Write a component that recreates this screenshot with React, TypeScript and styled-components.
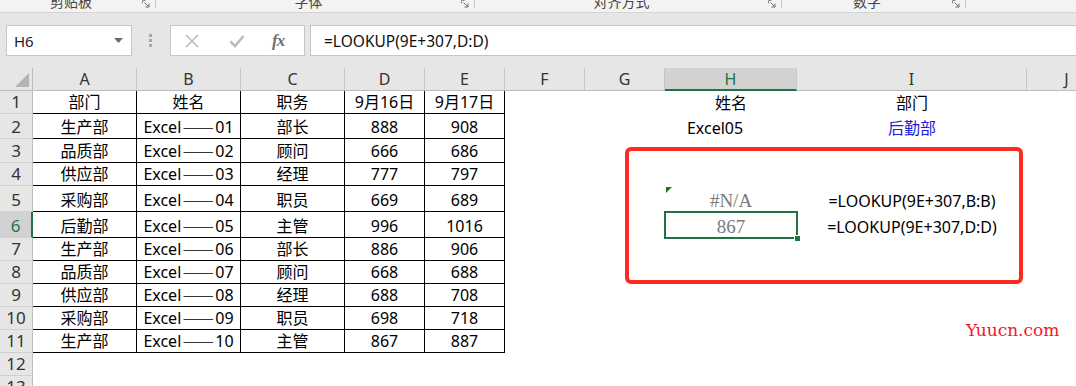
import React from "react";
import styled, { createGlobalStyle, css } from "styled-components";

const GREEN = "#217346";

const GlobalStyle = createGlobalStyle`
  html, body {
    margin: 0;
    padding: 0;
    background: #fff;
    overflow: hidden;
  }
  body {
    font-family: "Noto Sans", "Noto Sans CJK SC", sans-serif;
  }
`;

const Page = styled.div`
  width: 1076px;
  height: 386px;
  overflow: hidden;
  display: flex;
  flex-direction: column;
`;

/* ---------- ribbon (only its bottom edge is visible) ---------- */

const Ribbon = styled.div`
  display: flex;
  height: 12px;
  flex-shrink: 0;
  background: #f3f3f3;
  border-bottom: 1px solid #d5d5d5;
  overflow: hidden;
`;

const RibbonGroup = styled.div<{ $w: number }>`
  display: flex;
  align-items: flex-start;
  width: ${({ $w }) => $w}px;
  flex-shrink: 0;
`;

const GroupLabel = styled.div`
  flex: 1;
  margin-top: -6px;
  text-align: center;
  font-family: "Noto Sans CJK SC", sans-serif;
  font-size: 14px;
  line-height: 14px;
  color: #444;
`;

const Launcher = styled.svg`
  width: 8px;
  height: 8px;
  margin-right: 5px;
  flex-shrink: 0;
`;

const Divider = styled.div`
  width: 1px;
  height: 8px;
  background: #c6c6c6;
  flex-shrink: 0;
`;

/* ---------- formula bar ---------- */

const FormulaBand = styled.div`
  height: 55px;
  flex-shrink: 0;
  box-sizing: border-box;
  padding-top: 12px;
  background: #e6e6e6;
  display: flex;
  align-items: flex-start;
`;

const NameBox = styled.div`
  margin-left: 6px;
  width: 126px;
  height: 31px;
  box-sizing: border-box;
  background: #fff;
  border: 1px solid #c6c6c6;
  display: flex;
  align-items: center;
  justify-content: space-between;
  padding: 0 8px 0 7px;
  font-size: 15px;
  color: #222;
`;

const DropArrow = styled.svg`
  width: 9px;
  height: 5px;
`;

const Grip = styled.div`
  margin: 9px 0 0 17px;
  width: 3px;
  display: flex;
  flex-direction: column;
  gap: 2px;
  span {
    display: block;
    width: 3px;
    height: 3px;
    background: #a6a6a6;
  }
`;

const FxBox = styled.div`
  margin-left: 18px;
  width: 135px;
  height: 31px;
  box-sizing: border-box;
  background: #fff;
  border: 1px solid #c6c6c6;
  display: flex;
  align-items: center;
  padding-left: 13px;
`;

const BarIcon = styled.svg<{ $gap: number }>`
  width: 16px;
  height: 16px;
  margin-right: ${({ $gap }) => $gap}px;
`;

const FxLabel = styled.span`
  font-family: "Liberation Serif", serif;
  font-style: italic;
  font-weight: bold;
  font-size: 17px;
  color: #6f6f6f;
  letter-spacing: -1px;
`;

const FormulaInput = styled.div`
  margin-left: 5px;
  flex: 1;
  height: 31px;
  box-sizing: border-box;
  background: #fff;
  border: 1px solid #c6c6c6;
  border-right: none;
  display: flex;
  align-items: center;
  padding-left: 13px;
  font-size: 15.5px;
  color: #111;
`;

/* ---------- sheet ---------- */

const ROW_HEIGHTS = [23, 23, 25, 24, 23, 26, 26, 23, 23, 23, 23, 23, 23, 23];

const Sheet = styled.div`
  position: relative;
  flex: 1;
  overflow: hidden;
  display: grid;
  grid-template-columns: 33px 104px 104px 104px 80px 80px 80px 80px 132px 230px 80px;
  grid-template-rows: ${ROW_HEIGHTS.map((h) => `${h}px`).join(" ")};
`;

const Corner = styled.div`
  position: relative;
  background: #e6e6e6;
  border-right: 1px solid #bdbdbd;
  border-bottom: 1px solid #bdbdbd;
  svg {
    position: absolute;
    left: 0;
    top: 0;
  }
`;

const ColHead = styled.div<{ $active?: boolean }>`
  display: flex;
  align-items: center;
  justify-content: center;
  box-sizing: border-box;
  font-size: 16px;
  background: ${({ $active }) => ($active ? "#d2d2d2" : "#e6e6e6")};
  color: ${({ $active }) => ($active ? GREEN : "#333")};
  border-right: 1px solid #c6c6c6;
  border-bottom: ${({ $active }) => ($active ? `2px solid ${GREEN}` : "1px solid #bdbdbd")};
`;

const RowHead = styled.div<{ $active?: boolean }>`
  display: flex;
  align-items: flex-end;
  justify-content: center;
  box-sizing: border-box;
  padding-bottom: 1px;
  font-size: 17px;
  line-height: 21px;
  background: ${({ $active }) => ($active ? "#d2d2d2" : "#e6e6e6")};
  color: ${({ $active }) => ($active ? GREEN : "#333")};
  border-bottom: 1px solid #d0d0d0;
  border-right: ${({ $active }) => ($active ? `2px solid ${GREEN}` : "1px solid #bdbdbd")};
`;

const Cell = styled.div<{ $boxed?: boolean; $shift?: number }>`
  position: relative;
  display: flex;
  align-items: flex-end;
  justify-content: center;
  box-sizing: border-box;
  padding-bottom: 1px;
  padding-right: ${({ $shift }) => $shift ?? 0}px;
  font-size: 16px;
  line-height: 20px;
  color: #000;
  white-space: nowrap;
  ${({ $boxed }) =>
    $boxed &&
    css`
      border-right: 1px solid #000;
      border-bottom: 1px solid #000;
    `}
`;

const ErrorCell = styled(Cell)`
  &::before {
    content: "";
    position: absolute;
    left: 1px;
    top: 1px;
    border-top: 6px solid #1d7a1d;
    border-right: 6px solid transparent;
  }
`;

const SelectedCell = styled(Cell)`
  &::after {
    content: "";
    position: absolute;
    inset: -1px;
    border: 2px solid ${GREEN};
  }
  &::before {
    content: "";
    position: absolute;
    right: -4px;
    bottom: -4px;
    width: 5px;
    height: 5px;
    background: ${GREEN};
    border: 1px solid #fff;
    z-index: 1;
  }
`;

const Value = styled.span<{ $serif?: boolean; $color?: string }>`
  color: ${({ $color }) => $color ?? "inherit"};
  ${({ $serif }) =>
    $serif &&
    css`
      font-family: "Liberation Serif", serif;
      font-size: 19px;
    `}
`;

// full-width dashes, joined into one line as in the CJK font
const Dash = styled.span`
  font-family: "Noto Sans CJK SC", sans-serif;
  font-feature-settings: "fwid" 1;
  margin: 0 1px;
`;

const RedFrame = styled.div`
  position: absolute;
  left: 625px;
  top: 79px;
  width: 398px;
  height: 137px;
  box-sizing: border-box;
  border: 4px solid #ff2a1f;
  border-radius: 6px;
  pointer-events: none;
`;

const Watermark = styled.div`
  position: absolute;
  left: 966px;
  top: 253px;
  font-family: "DejaVu Serif", serif;
  font-size: 17px;
  line-height: 19px;
  color: #f0182a;
`;

/* ---------- data ---------- */

const COLS = ["A", "B", "C", "D", "E", "F", "G", "H", "I", "J"];

const TABLE = [
  ["部门", "姓名", "职务", "9月16日", "9月17日"],
  ["生产部", "Excel——01", "部长", "888", "908"],
  ["品质部", "Excel——02", "顾问", "666", "686"],
  ["供应部", "Excel——03", "经理", "777", "797"],
  ["采购部", "Excel——04", "职员", "669", "689"],
  ["后勤部", "Excel——05", "主管", "996", "1016"],
  ["生产部", "Excel——06", "部长", "886", "906"],
  ["品质部", "Excel——07", "顾问", "668", "688"],
  ["供应部", "Excel——08", "经理", "688", "708"],
  ["采购部", "Excel——09", "职员", "698", "718"],
  ["生产部", "Excel——10", "主管", "867", "887"],
];

const RIBBON = [
  { label: "剪贴板", w: 156 },
  { label: "字体", w: 319 },
  { label: "对齐方式", w: 307 },
  { label: "数字", w: 184 },
];

const LauncherIcon = () => (
  <Launcher viewBox="0 0 8 8">
    <path d="M0.5 0.5h3M0.5 0.5v3" stroke="#8a8a8a" strokeWidth="1" fill="none" />
    <path d="M2.5 2.5l4 4M7 3.5V7H3.5" stroke="#6a6a6a" strokeWidth="1" fill="none" />
  </Launcher>
);

const renderText = (text: string) => {
  if (!text.includes("——")) return text;
  const [head, tail] = text.split("——");
  return (
    <>
      {head}
      <Dash>——</Dash>
      {tail}
    </>
  );
};

const renderExtra = (row: number, col: string) => {
  const key = `${row}-${col}`;
  if (row === 1 && col === "H") return <Cell key={key}>姓名</Cell>;
  if (row === 1 && col === "I") return <Cell key={key}>部门</Cell>;
  if (row === 2 && col === "H")
    return (
      <Cell key={key} $shift={32}>
        Excel05
      </Cell>
    );
  if (row === 2 && col === "I")
    return (
      <Cell key={key}>
        <Value $color="#1a1ad6">后勤部</Value>
      </Cell>
    );
  if (row === 5 && col === "H")
    return (
      <ErrorCell key={key}>
        <Value $serif $color="#7b7b7b">
          #N/A
        </Value>
      </ErrorCell>
    );
  if (row === 5 && col === "I") return <Cell key={key}>=LOOKUP(9E+307,B:B)</Cell>;
  if (row === 6 && col === "H")
    return (
      <SelectedCell key={key}>
        <Value $serif $color="#7b7b7b">
          867
        </Value>
      </SelectedCell>
    );
  if (row === 6 && col === "I") return <Cell key={key}>=LOOKUP(9E+307,D:D)</Cell>;
  return <Cell key={key} />;
};

export default function App() {
  const rowCount = ROW_HEIGHTS.length - 1;

  return (
    <Page>
      <GlobalStyle />
      <Ribbon>
        {RIBBON.map((g) => (
          <RibbonGroup key={g.label} $w={g.w}>
            <GroupLabel>{g.label}</GroupLabel>
            <LauncherIcon />
            <Divider />
          </RibbonGroup>
        ))}
      </Ribbon>

      <FormulaBand>
        <NameBox>
          <span>H6</span>
          <DropArrow viewBox="0 0 9 5">
            <path d="M0 0h9L4.5 5z" fill="#6b6b6b" />
          </DropArrow>
        </NameBox>
        <Grip>
          <span />
          <span />
          <span />
        </Grip>
        <FxBox>
          <BarIcon viewBox="0 0 16 16" $gap={29}>
            <path d="M2 2l12 12M14 2L2 14" stroke="#bcbcbc" strokeWidth="1.6" fill="none" />
          </BarIcon>
          <BarIcon viewBox="0 0 16 16" $gap={27}>
            <path d="M1.5 8.5l4.5 4.5L14.5 3" stroke="#bcbcbc" strokeWidth="2.6" fill="none" />
          </BarIcon>
          <FxLabel>fx</FxLabel>
        </FxBox>
        <FormulaInput>=LOOKUP(9E+307,D:D)</FormulaInput>
      </FormulaBand>

      <Sheet>
        <Corner>
          <svg width="33" height="23" viewBox="0 0 33 23">
            <polygon points="15,19 29,5 29,19" fill="#b4b4b4" />
          </svg>
        </Corner>
        {COLS.map((c) => (
          <ColHead key={c} $active={c === "H"}>
            {c}
          </ColHead>
        ))}

        {Array.from({ length: rowCount }, (_, i) => {
          const row = i + 1;
          const data = TABLE[i];
          return (
            <React.Fragment key={row}>
              <RowHead $active={row === 6}>{row}</RowHead>
              {COLS.map((c, ci) =>
                data && ci < 5 ? (
                  <Cell key={`${row}-${c}`} $boxed>
                    {renderText(data[ci])}
                  </Cell>
                ) : (
                  renderExtra(row, c)
                )
              )}
            </React.Fragment>
          );
        })}

        <RedFrame />
        <Watermark>Yuucn.com</Watermark>
      </Sheet>
    </Page>
  );
}
